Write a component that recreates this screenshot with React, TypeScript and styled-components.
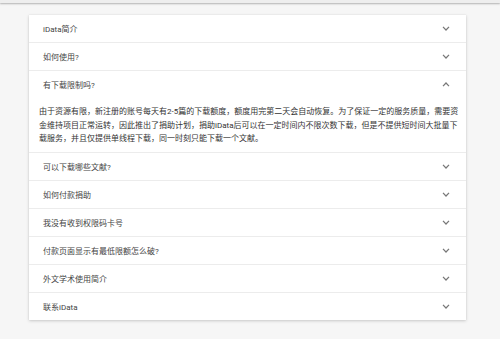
import React from "react";
import styled, { createGlobalStyle } from "styled-components";

const Global = createGlobalStyle`
  html, body { margin: 0; padding: 0; background: #f6f6f6; }
  body { font-family: Roboto, "Noto Sans CJK SC", sans-serif; }
`;

const Page = styled.div`
  width: 500px;
  height: 339px;
  background: #f6f6f6;
  overflow: hidden;
`;

const TopBar = styled.div`
  height: 3px;
  background: #eeeeee;
  box-shadow: 0 1px 2px rgba(0, 0, 0, 0.28);
`;

const Panels = styled.div`
  margin: 12px 0 0 29px;
  width: 437px;
  background: #fff;
  box-shadow: 0 1px 3px rgba(0, 0, 0, 0.18), 0 0 1px rgba(0, 0, 0, 0.1);
  display: flex;
  flex-direction: column;
`;

const Panel = styled.div<{ $first?: boolean }>`
  border-top: ${(p) => (p.$first ? "none" : "1px solid #ececec")};
`;

const Header = styled.div`
  height: 27px;
  display: flex;
  align-items: center;
  justify-content: space-between;
  padding: 0 16px 0 14px;
  font-size: 8px;
  color: #444;
`;

const Chevron = styled.svg`
  width: 8px;
  height: 5px;
  display: block;
`;

const Body = styled.div`
  padding: 7px 6px 6.5px 10px;
  font-size: 8px;
  line-height: 13.5px;
  color: #333;
`;

const items = [
  "iData简介",
  "如何使用?",
  "有下载限制吗?",
  "可以下载哪些文献?",
  "如何付款捐助",
  "我没有收到权限码卡号",
  "付款页面显示有最低限额怎么破?",
  "外文学术使用简介",
  "联系iData",
];

const bodyText =
  "由于资源有限，新注册的账号每天有2-5篇的下载额度，额度用完第二天会自动恢复。为了保证一定的服务质量，需要资金维持项目正常运转，因此推出了捐助计划，捐助iData后可以在一定时间内不限次数下载，但是不提供短时间大批量下载服务，并且仅提供单线程下载，同一时刻只能下载一个文献。";

function Icon({ up }: { up?: boolean }) {
  return (
    <Chevron viewBox="0 0 8 5">
      <polyline
        points={up ? "1,4.2 4,1 7,4.2" : "1,0.8 4,4 7,0.8"}
        fill="none"
        stroke="#777"
        strokeWidth="1.2"
      />
    </Chevron>
  );
}

export default function App() {
  return (
    <Page>
      <Global />
      <TopBar />
      <Panels>
        {items.map((t, i) => (
          <Panel key={t} $first={i === 0}>
            <Header>
              <span>{t}</span>
              <Icon up={i === 2} />
            </Header>
            {i === 2 && <Body>{bodyText}</Body>}
          </Panel>
        ))}
      </Panels>
    </Page>
  );
}
